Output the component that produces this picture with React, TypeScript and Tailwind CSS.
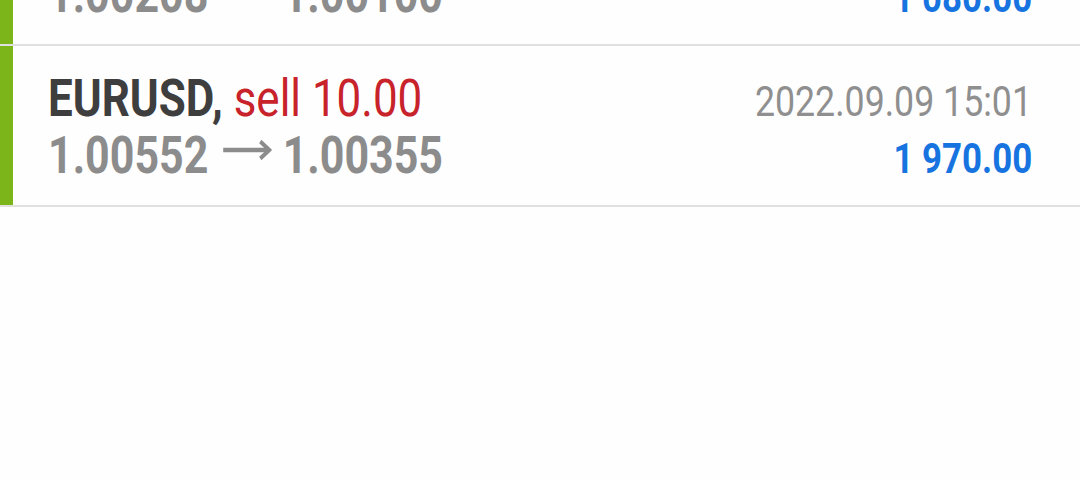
import React from 'react';

interface Deal {
  symbol: string;
  side: string;
  volume: string;
  open: string;
  close: string;
  time: string;
  profit: string;
}

const deals: Deal[] = [
  {
    symbol: 'EURUSD',
    side: 'sell',
    volume: '10.00',
    open: '1.00208',
    close: '1.00100',
    time: '2022.09.09 14:52',
    profit: '1 080.00',
  },
  {
    symbol: 'EURUSD',
    side: 'sell',
    volume: '10.00',
    open: '1.00552',
    close: '1.00355',
    time: '2022.09.09 15:01',
    profit: '1 970.00',
  },
];

const Arrow = () => (
  <svg
    width="59"
    height="22"
    viewBox="0 0 59 22"
    className="ml-[18px] mr-[13px] mb-[12px] inline-block align-baseline"
    fill="none"
    stroke="#8c8c8c"
    strokeWidth="4.4"
  >
    <line x1="0" y1="11" x2="55" y2="11" />
    <polyline points="45,2.5 56,11 45,19.5" strokeLinejoin="miter" />
  </svg>
);

const DealRow: React.FC<{ deal: Deal; first?: boolean }> = ({ deal, first }) => (
  <div className={`flex h-[161px] border-b-2 border-[#e0e0e0] ${first ? 'mt-[-115px]' : ''}`}>
    {/* Side marker */}
    <div className="w-[13px] shrink-0 bg-[#7cb51a]" />

    <div className="flex-1 pl-[35px] pr-[48px] pt-[24px]">
      <div className="flex items-baseline justify-between leading-[57px]">
        <span className="inline-block origin-left scale-x-[0.845] whitespace-nowrap text-[52px]">
          <span className="font-bold text-[#3e3e3e]">{deal.symbol},</span>{' '}
          <span className="text-[#c8222b]">
            {deal.side} {deal.volume}
          </span>
        </span>
        <span className="inline-block origin-right scale-x-[0.85] whitespace-nowrap text-[42px] text-[#8f8f8f]">
          {deal.time}
        </span>
      </div>
      <div className="mt-[-3px] flex items-baseline justify-between leading-[57px]">
        <span className="inline-block origin-left scale-x-[0.826] whitespace-nowrap text-[52px] font-bold text-[#8c8c8c]">
          {deal.open}
          <Arrow />
          {deal.close}
        </span>
        <span className="inline-block origin-right scale-x-[0.83] whitespace-nowrap text-[42px] font-bold text-[#1773df]">
          {deal.profit}
        </span>
      </div>
    </div>
  </div>
);

export default function App() {
  return (
    <div className="h-[480px] w-[1080px] overflow-hidden bg-[#fefefe] font-['Roboto',sans-serif]">
      {deals.map((d, i) => (
        <DealRow key={i} deal={d} first={i === 0} />
      ))}
    </div>
  );
}
